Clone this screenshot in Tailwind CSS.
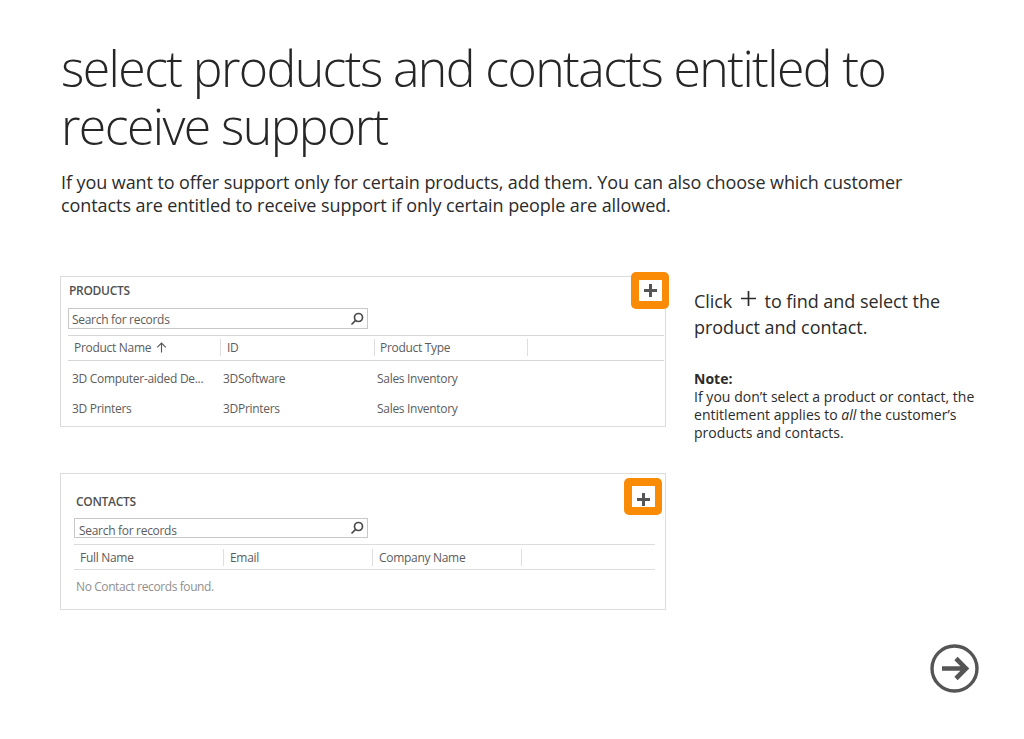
<!DOCTYPE html>
<html lang="en">
<head>
    <meta charset="UTF-8">
    <meta name="viewport" content="width=device-width, initial-scale=1.0">
    <title>Select products and contacts</title>
    <script src="https://cdn.jsdelivr.net/npm/@tailwindcss/browser@4"></script>
</head>
<body class="bg-white font-['Open_Sans',sans-serif]">
    <div class="relative w-[1024px] h-[739px] overflow-hidden pl-[60px] pt-[39px]">
        <!-- Heading -->
        <h1 class="w-[900px] text-[50px] leading-[58px] font-light tracking-[-1.6px] text-[#262626] pl-px">select products and contacts entitled to receive support</h1>
        <p class="w-[860px] mt-[16px] pl-px text-[18px] leading-[23px] tracking-[-0.08px] text-[#2b2b2b]">If you want to offer support only for certain products, add them. You can also choose which customer contacts are entitled to receive support if only certain people are allowed.</p>

        <div class="flex mt-[59px]">
            <!-- Panels -->
            <div class="w-[606px] shrink-0">
                <!-- Products -->
                <div class="relative h-[151px] border border-[#dcdcdc] pl-[8px] pr-[1px] text-[#5c5c5c] text-[12px] tracking-[-0.3px]">
                    <div class="pt-[5px] h-[31px] leading-[18px] font-semibold text-[#505050]">PRODUCTS</div>
                    <div class="flex items-center justify-between w-[300px] h-[21px] border border-[#c8c8c8] pl-[3px] pr-[3px] -ml-px">
                        <span class="pt-[2px]">Search for records</span>
                        <svg class="w-[14px] h-[14px]" viewBox="0 0 14 14" fill="none" stroke="#4a4a4a" stroke-width="1.7"><circle cx="8.5" cy="5.5" r="4"/><path d="M5.6 8.4 1.5 12.5"/></svg>
                    </div>
                    <div class="flex items-center h-[26px] mt-[6px] -ml-px pb-[2px] border-t border-b border-[#d6d6d6]">
                        <div class="w-[152px] h-[17px] leading-[17px] pl-[6px] flex items-center gap-[5px]">Product Name
                            <svg class="w-[11px] h-[11px]" viewBox="0 0 11 11" fill="none" stroke="#555" stroke-width="1.1"><path d="M5.5 10.5V1M1.2 5.3 5.5 1l4.3 4.3"/></svg>
                        </div>
                        <div class="w-[154px] h-[17px] border-l border-[#dedede] pl-[6px] leading-[17px]">ID</div>
                        <div class="w-[153px] h-[17px] border-l border-[#dedede] pl-[5px] leading-[17px]">Product Type</div>
                        <div class="h-[17px] border-l border-[#dedede]"></div>
                    </div>
                    <div class="flex items-center h-[31px] mt-[2px]">
                        <div class="w-[154px] pl-[3px]">3D Computer-aided De...</div>
                        <div class="w-[154px]">3DSoftware</div>
                        <div>Sales Inventory</div>
                    </div>
                    <div class="flex items-center h-[30px]">
                        <div class="w-[154px] pl-[3px]">3D Printers</div>
                        <div class="w-[154px]">3DPrinters</div>
                        <div>Sales Inventory</div>
                    </div>
                    <div class="absolute left-[570px] -top-[5px] w-[38px] h-[37px] rounded-[5px] bg-[#f98b06] flex items-center justify-center">
                        <div class="w-[23px] h-[21px] bg-white flex items-center justify-center">
                            <svg class="w-[13px] h-[13px]" viewBox="0 0 13 13" fill="none" stroke="#555555" stroke-width="3"><path d="M6.5 0v13M0 6.5h13"/></svg>
                        </div>
                    </div>
                </div>

                <!-- Contacts -->
                <div class="relative h-[137px] mt-[46px] border border-[#dcdcdc] pl-[14px] pr-[10px] text-[#5c5c5c] text-[12px] tracking-[-0.3px]">
                    <div class="pt-[19px] pl-px h-[44px] leading-[18px] font-semibold text-[#505050]">CONTACTS</div>
                    <div class="flex items-end justify-between w-[294px] h-[20px] border border-[#c8c8c8] pl-[4px] pr-[3px] -ml-px">
                        <span class="leading-[13px]">Search for records</span>
                        <svg class="w-[14px] h-[14px] mb-[2px]" viewBox="0 0 14 14" fill="none" stroke="#4a4a4a" stroke-width="1.7"><circle cx="8.5" cy="5.5" r="4"/><path d="M5.6 8.4 1.5 12.5"/></svg>
                    </div>
                    <div class="flex items-center h-[26px] mt-[6px] -ml-px border-t border-b border-[#dcdcdc]">
                        <div class="w-[149px] h-[17px] leading-[17px] pl-[6px]">Full Name</div>
                        <div class="w-[149px] h-[17px] border-l border-[#dedede] pl-[6px] leading-[17px]">Email</div>
                        <div class="w-[149px] h-[17px] border-l border-[#dedede] pl-[6px] leading-[17px]">Company Name</div>
                        <div class="h-[17px] border-l border-[#dedede]"></div>
                    </div>
                    <div class="pt-[8px] pl-px leading-[18px] tracking-[-0.4px] text-[#8f8f8f]">No Contact records found.</div>
                    <div class="absolute left-[563px] top-[4px] w-[38px] h-[37px] rounded-[5px] bg-[#f98b06] flex items-center justify-center">
                        <div class="w-[23px] h-[21px] bg-white flex items-center justify-center">
                            <svg class="w-[13px] h-[13px] mt-[6px]" viewBox="0 0 13 13" fill="none" stroke="#555555" stroke-width="3"><path d="M6.5 0v13M0 6.5h13"/></svg>
                        </div>
                    </div>
                </div>
            </div>

            <!-- Side note -->
            <div class="ml-[28px] w-[300px] text-[#2b2b2b]">
                <div class="pt-[12px] text-[18px] leading-[26px] tracking-[-0.05px]">
                    Click <svg class="inline-block w-[15px] h-[15px] mx-[4px] align-[2px]" viewBox="0 0 15 15" fill="none" stroke="#2b2b2b" stroke-width="1.7"><path d="M7.5 0v15M0 7.5h15"/></svg> to find and select the<br>product and contact.
                </div>
                <div class="mt-[30px] text-[14px] leading-[18px] tracking-[0.03px]">
                    <b class="font-bold block">Note:</b>
                    If you don’t select a product or contact, the<br>entitlement applies to <i>all</i> the customer’s<br>products and contacts.
                </div>
            </div>
        </div>

        <!-- Next button -->
        <svg class="absolute left-[930px] top-[644px] w-[50px] h-[50px]" viewBox="0 0 50 50" fill="none" stroke="#555555">
            <circle cx="24.5" cy="24.5" r="22.5" stroke-width="3.4"/>
            <path d="M12 24.5h24M26 14.5 36 24.5 26 34.5" stroke-width="4.6"/>
        </svg>
    </div>
</body>
</html>
